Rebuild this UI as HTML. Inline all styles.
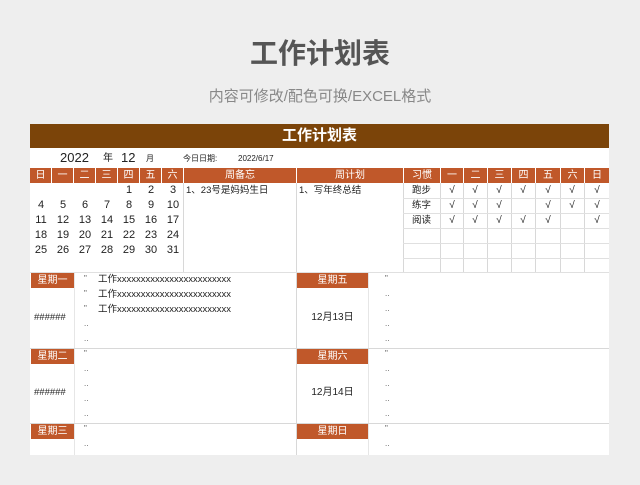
<!DOCTYPE html>
<html><head><meta charset="utf-8"><style>
*{margin:0;padding:0;box-sizing:border-box}
body{width:640px;height:485px;background:#eeeeee;font-family:"Liberation Sans","Noto Sans CJK SC",sans-serif;position:relative;overflow:hidden;color:#222}
.a{position:absolute}
.c{position:absolute;text-align:center;white-space:nowrap}
.h{position:absolute;background:#c0582a;color:#fff;font-size:10px;text-align:center;line-height:15px;height:15px}
.vl{position:absolute;width:1px;background:#d8d8d8}
.hl{position:absolute;height:1px;background:#e0e0e0}
.n{position:absolute;width:22px;text-align:center;font-size:11px;line-height:15px}
.k{position:absolute;width:24px;text-align:center;font-size:10px;line-height:15px}
.d{position:absolute;font-size:8px;color:#555;line-height:15px}
.t{position:absolute;font-size:9.5px;line-height:15px}
</style></head><body>
<div class="c" style="left:0;width:640px;top:36px;font-size:28px;color:#555;line-height:36px;font-weight:bold">工作计划表</div>
<div class="c" style="left:0;width:640px;top:87px;font-size:15px;color:#888;line-height:20px">内容可修改/配色可换/EXCEL格式</div>

<div class="a" style="left:30px;top:124px;width:579px;height:331px;background:#fff"></div>
<div class="a" style="left:30px;top:124px;width:579px;height:24px;background:#7b4409;color:#fff;font-size:15px;font-weight:bold;text-align:center;line-height:24px">工作计划表</div>

<div class="t" style="left:60px;top:150px;font-size:13px">2022</div>
<div class="t" style="left:103px;top:151px;font-size:10px">年</div>
<div class="t" style="left:121px;top:150px;font-size:13px">12</div>
<div class="t" style="left:146px;top:151px;font-size:8px">月</div>
<div class="t" style="left:183px;top:151px;font-size:8px">今日日期:</div>
<div class="t" style="left:238px;top:151px;font-size:8px">2022/6/17</div>

<div class="h" style="left:30px;top:168px;width:21px">日</div>
<div class="h" style="left:52px;top:168px;width:21px">一</div>
<div class="h" style="left:74px;top:168px;width:21px">二</div>
<div class="h" style="left:96px;top:168px;width:21px">三</div>
<div class="h" style="left:118px;top:168px;width:21px">四</div>
<div class="h" style="left:140px;top:168px;width:21px">五</div>
<div class="h" style="left:162px;top:168px;width:21px">六</div>
<div class="h" style="left:184px;top:168px;width:112px">周备忘</div>
<div class="h" style="left:297px;top:168px;width:106px">周计划</div>
<div class="h" style="left:404px;top:168px;width:36px">习惯</div>
<div class="h" style="left:441px;top:168px;width:22px">一</div>
<div class="h" style="left:464px;top:168px;width:23px">二</div>
<div class="h" style="left:488px;top:168px;width:23px">三</div>
<div class="h" style="left:512px;top:168px;width:23px">四</div>
<div class="h" style="left:536px;top:168px;width:24px">五</div>
<div class="h" style="left:561px;top:168px;width:23px">六</div>
<div class="h" style="left:585px;top:168px;width:24px">日</div>

<div class="n" style="left:118px;top:183px">1</div><div class="n" style="left:140px;top:183px">2</div><div class="n" style="left:162px;top:183px">3</div>
<div class="n" style="left:30px;top:198px">4</div><div class="n" style="left:52px;top:198px">5</div><div class="n" style="left:74px;top:198px">6</div><div class="n" style="left:96px;top:198px">7</div><div class="n" style="left:118px;top:198px">8</div><div class="n" style="left:140px;top:198px">9</div><div class="n" style="left:162px;top:198px">10</div>
<div class="n" style="left:30px;top:213px">11</div><div class="n" style="left:52px;top:213px">12</div><div class="n" style="left:74px;top:213px">13</div><div class="n" style="left:96px;top:213px">14</div><div class="n" style="left:118px;top:213px">15</div><div class="n" style="left:140px;top:213px">16</div><div class="n" style="left:162px;top:213px">17</div>
<div class="n" style="left:30px;top:228px">18</div><div class="n" style="left:52px;top:228px">19</div><div class="n" style="left:74px;top:228px">20</div><div class="n" style="left:96px;top:228px">21</div><div class="n" style="left:118px;top:228px">22</div><div class="n" style="left:140px;top:228px">23</div><div class="n" style="left:162px;top:228px">24</div>
<div class="n" style="left:30px;top:243px">25</div><div class="n" style="left:52px;top:243px">26</div><div class="n" style="left:74px;top:243px">27</div><div class="n" style="left:96px;top:243px">28</div><div class="n" style="left:118px;top:243px">29</div><div class="n" style="left:140px;top:243px">30</div><div class="n" style="left:162px;top:243px">31</div>

<div class="t" style="left:186px;top:183px">1、23号是妈妈生日</div>
<div class="t" style="left:299px;top:183px">1、写年终总结</div>

<div class="vl" style="left:183px;top:183px;height:89px"></div>
<div class="vl" style="left:296px;top:183px;height:89px"></div>
<div class="vl" style="left:403px;top:183px;height:89px"></div>
<div class="vl" style="left:440px;top:183px;height:89px"></div>
<div class="vl" style="left:463px;top:183px;height:89px"></div>
<div class="vl" style="left:487px;top:183px;height:89px"></div>
<div class="vl" style="left:511px;top:183px;height:89px"></div>
<div class="vl" style="left:535px;top:183px;height:89px"></div>
<div class="vl" style="left:560px;top:183px;height:89px"></div>
<div class="vl" style="left:584px;top:183px;height:89px"></div>
<div class="hl" style="left:403px;top:198px;width:206px"></div>
<div class="hl" style="left:403px;top:213px;width:206px"></div>
<div class="hl" style="left:403px;top:228px;width:206px"></div>
<div class="hl" style="left:403px;top:243px;width:206px"></div>
<div class="hl" style="left:403px;top:258px;width:206px"></div>
<div class="hl" style="left:30px;top:272px;width:579px"></div>

<div class="t" style="left:412px;top:183px">跑步</div>
<div class="t" style="left:412px;top:198px">练字</div>
<div class="t" style="left:412px;top:213px">阅读</div>
<div class="k" style="left:440px;top:183px">√</div><div class="k" style="left:463px;top:183px">√</div><div class="k" style="left:487px;top:183px">√</div><div class="k" style="left:511px;top:183px">√</div><div class="k" style="left:536px;top:183px">√</div><div class="k" style="left:560px;top:183px">√</div><div class="k" style="left:585px;top:183px">√</div>
<div class="k" style="left:440px;top:198px">√</div><div class="k" style="left:463px;top:198px">√</div><div class="k" style="left:487px;top:198px">√</div><div class="k" style="left:536px;top:198px">√</div><div class="k" style="left:560px;top:198px">√</div><div class="k" style="left:585px;top:198px">√</div>
<div class="k" style="left:440px;top:213px">√</div><div class="k" style="left:463px;top:213px">√</div><div class="k" style="left:487px;top:213px">√</div><div class="k" style="left:511px;top:213px">√</div><div class="k" style="left:536px;top:213px">√</div><div class="k" style="left:585px;top:213px">√</div>

<div class="vl" style="left:74px;top:273px;height:182px;background:#e6e6e6"></div>
<div class="vl" style="left:296px;top:273px;height:182px"></div>
<div class="vl" style="left:368px;top:273px;height:182px;background:#e6e6e6"></div>
<div class="hl" style="left:30px;top:348px;width:579px;background:#d8d8d8"></div>
<div class="hl" style="left:30px;top:423px;width:579px;background:#d8d8d8"></div>

<div class="h" style="left:31px;top:273px;width:43px">星期一</div>
<div class="h" style="left:31px;top:349px;width:43px">星期二</div>
<div class="h" style="left:31px;top:424px;width:43px">星期三</div>
<div class="h" style="left:297px;top:273px;width:71px">星期五</div>
<div class="h" style="left:297px;top:349px;width:71px">星期六</div>
<div class="h" style="left:297px;top:424px;width:71px">星期日</div>

<div class="t" style="left:34px;top:310px">######</div>
<div class="t" style="left:34px;top:385px">######</div>
<div class="c" style="left:297px;width:71px;top:310px;font-size:10px;line-height:15px">12月13日</div>
<div class="c" style="left:297px;width:71px;top:385px;font-size:10px;line-height:15px">12月14日</div>

<div class="t" style="left:98px;top:272px">工作xxxxxxxxxxxxxxxxxxxxxxxx</div>
<div class="t" style="left:98px;top:287px">工作xxxxxxxxxxxxxxxxxxxxxxxx</div>
<div class="t" style="left:98px;top:302px">工作xxxxxxxxxxxxxxxxxxxxxxxx</div>

<div class="d" style="left:84px;top:271px">"</div><div class="d" style="left:84px;top:286px">"</div><div class="d" style="left:84px;top:301px">"</div><div class="d" style="left:84px;top:316px">..</div><div class="d" style="left:84px;top:331px">..</div>
<div class="d" style="left:84px;top:346px">"</div><div class="d" style="left:84px;top:361px">..</div><div class="d" style="left:84px;top:376px">..</div><div class="d" style="left:84px;top:391px">..</div><div class="d" style="left:84px;top:406px">..</div>
<div class="d" style="left:84px;top:421px">"</div><div class="d" style="left:84px;top:436px">..</div>
<div class="d" style="left:385px;top:271px">"</div><div class="d" style="left:385px;top:286px">..</div><div class="d" style="left:385px;top:301px">..</div><div class="d" style="left:385px;top:316px">..</div><div class="d" style="left:385px;top:331px">..</div>
<div class="d" style="left:385px;top:346px">"</div><div class="d" style="left:385px;top:361px">..</div><div class="d" style="left:385px;top:376px">..</div><div class="d" style="left:385px;top:391px">..</div><div class="d" style="left:385px;top:406px">..</div>
<div class="d" style="left:385px;top:421px">"</div><div class="d" style="left:385px;top:436px">..</div>
</body></html>
